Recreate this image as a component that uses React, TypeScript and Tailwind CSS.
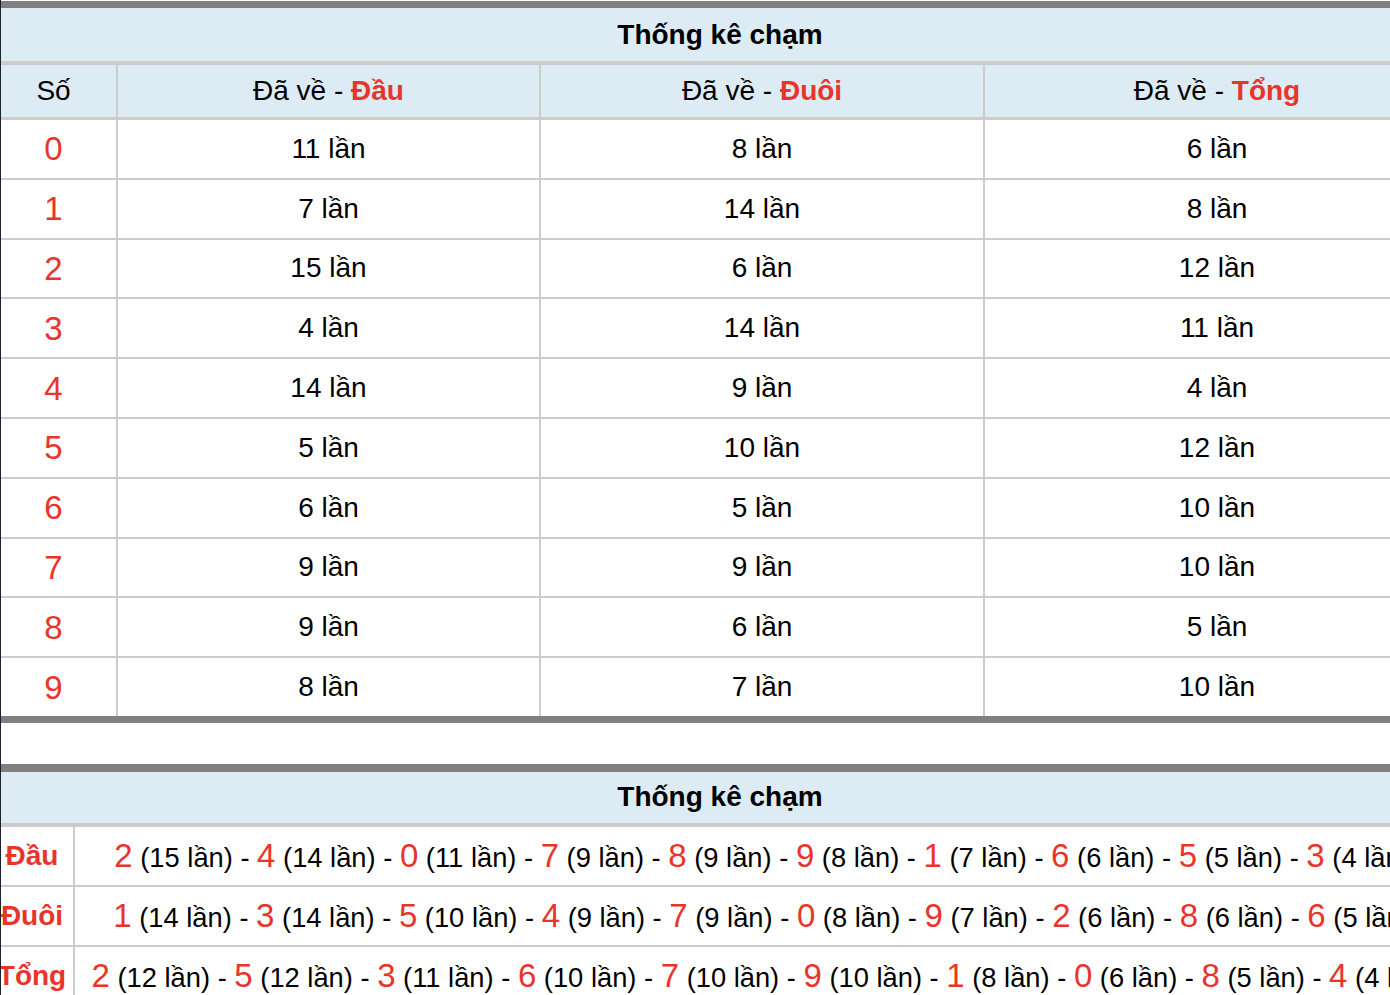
import React from "react";

const rows: [number, number, number, number][] = [
  [0, 11, 8, 6],
  [1, 7, 14, 8],
  [2, 15, 6, 12],
  [3, 4, 14, 11],
  [4, 14, 9, 4],
  [5, 5, 10, 12],
  [6, 6, 5, 10],
  [7, 9, 9, 10],
  [8, 9, 6, 5],
  [9, 8, 7, 10],
];

const summary: { label: string; items: [number, number][] }[] = [
  { label: "Đầu", items: [[2, 15], [4, 14], [0, 11], [7, 9], [8, 9], [9, 8], [1, 7], [6, 6], [5, 5], [3, 4]] },
  { label: "Đuôi", items: [[1, 14], [3, 14], [5, 10], [4, 9], [7, 9], [0, 8], [9, 7], [2, 6], [8, 6], [6, 5]] },
  { label: "Tổng", items: [[2, 12], [5, 12], [3, 11], [6, 10], [7, 10], [9, 10], [1, 8], [0, 6], [8, 5], [4, 4]] },
];

export default function App() {
  return (
    <div className="w-[1390px] h-[995px] overflow-hidden border-l border-[#1b2330] bg-white font-['Liberation_Sans',Arial,sans-serif] text-black">
      <div className="ml-[-10px] w-[1458px] pt-px">
        {/* Table 1 */}
        <div className="h-[7px] bg-[#808080]" />
        <div className="h-[53px] bg-[#dcebf4] border-b-4 border-[#cccccc] box-content flex items-center justify-center text-[28px] font-bold leading-none">
          Thống kê chạm
        </div>
        <div className="h-[52px] bg-[#dcebf4] border-b-[3px] border-[#cccccc] box-content flex text-[28px] leading-none">
          <div className="w-[125px] flex items-center justify-center">Số</div>
          <div className="w-[423px] border-l-2 border-[#cccccc] flex items-center justify-center">
            Đã về -&nbsp;<span className="font-bold text-[#e8352b]">Đầu</span>
          </div>
          <div className="w-[444px] border-l-2 border-[#cccccc] flex items-center justify-center">
            Đã về -&nbsp;<span className="font-bold text-[#e8352b]">Đuôi</span>
          </div>
          <div className="w-[466px] border-l-2 border-[#cccccc] flex items-center justify-center">
            Đã về -&nbsp;<span className="font-bold text-[#e8352b]">Tổng</span>
          </div>
        </div>
        {rows.map((r, i) => (
          <div
            key={r[0]}
            className={`h-[57.8px] box-content flex text-[28px] leading-none ${i < rows.length - 1 ? "border-b-2 border-[#cccccc]" : ""}`}
          >
            <div className="w-[125px] flex items-center justify-center text-[33px] text-[#e8352b]">{r[0]}</div>
            <div className="w-[423px] border-l-2 border-[#cccccc] flex items-center justify-center">{r[1]} lần</div>
            <div className="w-[444px] border-l-2 border-[#cccccc] flex items-center justify-center">{r[2]} lần</div>
            <div className="w-[466px] border-l-2 border-[#cccccc] flex items-center justify-center">{r[3]} lần</div>
          </div>
        ))}
        <div className="h-[7px] bg-[#808080]" />

        {/* Table 2 */}
        <div className="mt-[41px] h-[8px] bg-[#808080]" />
        <div className="h-[51px] bg-[#dcebf4] border-b-4 border-[#cccccc] box-content flex items-center justify-center text-[28px] font-bold leading-none">
          Thống kê chạm
        </div>
        {summary.map((s, i) => (
          <div
            key={s.label}
            className={`h-[58px] box-content flex leading-none ${i < summary.length - 1 ? "border-b-2 border-[#cccccc]" : ""}`}
          >
            <div className="w-[82px] flex items-center justify-center text-[28px] font-bold text-[#e8352b]">{s.label}</div>
            <div className="w-[1376px] border-l-2 border-[#cccccc] flex items-center justify-center whitespace-nowrap text-[27.3px]">
              <span>
                {s.items.map(([n, c], j) => (
                  <React.Fragment key={j}>
                    {j > 0 ? " - " : ""}
                    <span className="text-[33px] text-[#e8352b]">{n}</span> ({c} lần)
                  </React.Fragment>
                ))}
              </span>
            </div>
          </div>
        ))}
      </div>
    </div>
  );
}
